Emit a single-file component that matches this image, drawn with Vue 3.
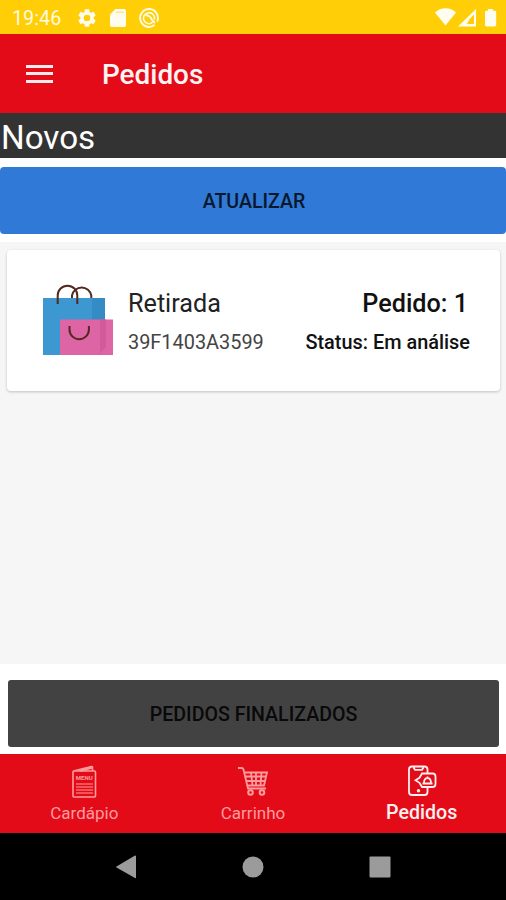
<template>
  <div class="screen">
    <div class="status-bar">
      <span class="clock">19:46</span>
      <svg class="status-gear" width="22" height="22" viewBox="0 0 24 24">
        <path d="M19.14 12.94c.04-.3.06-.61.06-.94s-.02-.64-.07-.94l2.03-1.58a.49.49 0 0 0 .12-.61l-1.92-3.32a.49.49 0 0 0-.59-.22l-2.39.96a7 7 0 0 0-1.62-.94l-.36-2.54A.48.48 0 0 0 13.92 2.4h-3.84a.48.48 0 0 0-.47.41l-.36 2.54c-.59.24-1.13.57-1.62.94l-2.39-.96a.48.48 0 0 0-.59.22L2.74 8.87a.48.48 0 0 0 .12.61l2.03 1.58c-.05.3-.09.63-.09.94s.02.64.07.94l-2.03 1.58a.49.49 0 0 0-.12.61l1.92 3.32c.12.22.37.29.59.22l2.39-.96c.5.38 1.03.7 1.62.94l.36 2.54c.05.24.24.41.48.41h3.84c.24 0 .44-.17.47-.41l.36-2.54a7 7 0 0 0 1.62-.94l2.39.96c.22.08.47 0 .59-.22l1.92-3.32a.48.48 0 0 0-.12-.61zM12 15.600a3.600 3.600 0 1 1 0-7.200 3.600 3.600 0 0 1 0 7.200z" />
      </svg>
      <svg class="status-card" width="16" height="18" viewBox="0 0 16 18">
        <path d="M5.500 0H14a2 2 0 0 1 2 2v14a2 2 0 0 1-2 2H2a2 2 0 0 1-2-2V5.500z" />
        <path class="notch" d="M6 3.200h8" />
      </svg>
      <svg class="status-sync" width="20" height="20" viewBox="0 0 20 20">
        <path d="M15.500 17A8.900 8.900 0 1 1 18.200 13.500" />
        <path class="inner" d="M13.700 14.200A5.500 5.500 0 1 1 15.300 11.500" />
        <path d="M6.500 7c3.500.3 5.500 2 6.500 5l3 3" />
      </svg>
      <span class="spacer"></span>
      <svg width="63" height="20" viewBox="0 0 63 20">
        <path d="M0 4.500C5.500-1.200 15.500-1.200 21 4.500L10.500 17.500z" />
        <path d="M41 1v17.500H23z" />
        <path class="signal-hole" d="M39 6.500v9.500h-7l2.500-5z" />
        <path d="M53 1h5v1.700h2q1.200 0 1.200 1.200v13.200q0 1.400-1.400 1.400h-8.400q-1.400 0-1.400-1.400V3.900q0-1.200 1.200-1.200H53z" />
      </svg>
    </div>

    <header class="app-bar">
      <button class="menu-button" aria-label="Menu">
        <span></span>
        <span></span>
        <span></span>
      </button>
      <h1>Pedidos</h1>
    </header>

    <h2 class="section-title">Novos</h2>
    <button class="refresh">ATUALIZAR</button>

    <main class="orders">
      <article v-for="order in orders" :key="order.code" class="order">
        <svg class="bags" width="72" height="72" viewBox="0 0 72 72">
          <path fill="#3d98d1" d="M1 14h62v57H1z" />
          <path fill="#358cc5" d="M50 14h13v57H50z" />
          <path fill="#de65a5" d="M18 35.500h53V71H18z" />
          <path fill="#d25a9b" d="M58 35.500h6V63l-8 8h2z" />
          <path class="handle" d="M15.700 20V11.500a9.800 9.800 0 0 1 19.600 0V20M30 14v-2.500a9.800 9.800 0 0 1 19.300 0V14M27.500 42v3.500a9.700 9.700 0 0 0 19.400 0V42" />
        </svg>
        <div class="details">
          <span class="kind">{{ order.kind }}</span>
          <span class="code">{{ order.code }}</span>
        </div>
        <div class="summary">
          <strong class="number">Pedido: {{ order.number }}</strong>
          <strong class="state">Status: {{ order.status }}</strong>
        </div>
      </article>
    </main>

    <div class="footer">
      <button class="finished">PEDIDOS FINALIZADOS</button>
    </div>

    <nav class="tabs">
      <a class="tab">
        <svg width="30" height="36" viewBox="0 0 30 36">
          <rect x="4" y="8" width="22.500" height="26" rx="1" />
          <path d="M4.500 8L22.500 3.500q1-.2 1 1V8M11 8l12-3" />
          <path class="thin" d="M7 21h17M7 24h17M7 27h17M7 30h17" />
          <text x="15.200" y="16.500" text-anchor="middle">MENU</text>
        </svg>
        <span>Cardápio</span>
      </a>
      <a class="tab">
        <svg width="34" height="36" viewBox="0 0 34 36">
          <path class="cart" d="M2 5h3.500q1.500 0 2 1.500L12 25.500h18M8.500 9.500h22.500l-3 13H11.500M10 13.500h20M11 18h18M15 10l1.500 12M20 10v12M25.500 10l-1 12" />
          <circle class="wheel" cx="14.500" cy="29.500" r="2.300" />
          <circle class="wheel" cx="26" cy="29.500" r="2.300" />
        </svg>
        <span>Carrinho</span>
      </a>
      <a class="tab active">
        <svg width="32" height="36" viewBox="0 0 32 36">
          <path d="M21.500 10V6.500q0-3-3-3H6q-3 0-3 3v22.500q0 3 3 3h12.500q3 0 3-3V24.500M7.500 4.500l1.500 2.300h7l1.500-2.300" />
          <path d="M16 10.500h10.500q3 0 3 3v7.500q0 3-3 3H16l-2.500-4.200-4-2.500 4-2.500z" />
          <path d="M16.500 20.500h10M18 20c0-6.500 7-6.500 7 0M21.500 13.500v1.500" />
          <circle class="dot" cx="12.500" cy="27.800" r="1.700" />
        </svg>
        <span>Pedidos</span>
      </a>
    </nav>

    <div class="system-nav">
      <svg width="22" height="26" viewBox="0 0 22 26">
        <path d="M20 1.500q1 0 1 1v21q0 1-1 .5L1.500 13.500q-1-.5 0-1z" />
      </svg>
      <svg width="22" height="26" viewBox="0 0 22 26">
        <circle cx="11" cy="13" r="10.500" />
      </svg>
      <svg width="22" height="26" viewBox="0 0 22 26">
        <rect x=".5" y="2.500" width="21" height="21" rx="1" />
      </svg>
    </div>
  </div>
</template>

<script setup>
import { ref } from 'vue'

const orders = ref([
  {
    kind: 'Retirada',
    code: '39F1403A3599',
    number: 1,
    status: 'Em análise'
  }
])
</script>

<style>
body {
  margin: 0;
}
</style>

<style scoped>
.screen {
  display: flex;
  flex-direction: column;
  width: 506px;
  height: 900px;
  background: #fff;
  font-family: Roboto, sans-serif;
}

button {
  padding: 0;
  border: 0;
  font-family: inherit;
}

h1,
h2 {
  margin: 0;
}

.status-bar {
  display: flex;
  align-items: center;
  box-sizing: border-box;
  height: 34px;
  padding: 1px 8px 0 12px;
  background: #ffce07;
  color: #fffbe0;
}

.status-bar svg {
  fill: #fffdf0;
}

.clock {
  width: 64px;
  padding-top: 2px;
  font-size: 19.8px;
}

.status-card {
  margin-left: 12px;
}

.status-card .notch {
  stroke: #ffe88a;
  stroke-width: 1.5;
}

.status-bar .status-sync {
  margin-left: 13px;
  fill: none;
  stroke: #fffbe0;
  stroke-width: 2;
}

.status-sync .inner {
  stroke-width: 1.6;
}

.status-bar .signal-hole {
  fill: #ffce07;
}

.spacer {
  flex: 1;
}

.app-bar {
  display: flex;
  align-items: center;
  box-sizing: border-box;
  height: 79px;
  padding: 2px 0 0 26px;
  background: #e40b19;
}

.menu-button {
  display: flex;
  flex-direction: column;
  gap: 4.5px;
  width: 27px;
  margin: 0 49px 2px 0;
  background: none;
}

.menu-button span {
  height: 3px;
  background: #ffe9ea;
}

h1 {
  color: #fff3f3;
  font-size: 27.9px;
  font-weight: 500;
}

.section-title {
  height: 45px;
  padding-left: 1px;
  background: #333;
  color: #fff;
  font-size: 33.2px;
  font-weight: 400;
  line-height: 50px;
}

.refresh {
  flex: none;
  height: 67px;
  margin: 9px 0 8px;
  padding: 1px 0 0 2px;
  border-radius: 4px;
  background: #3079d6;
  color: #07182d;
  font-size: 19.6px;
  font-weight: 500;
}

.orders {
  flex: 1;
  padding: 8px 6px 0 7px;
  background: #f6f6f6;
}

.order {
  display: flex;
  box-sizing: border-box;
  height: 141px;
  padding: 34px 30px 0 35px;
  border-radius: 4px;
  background: #fff;
  box-shadow: 0 1px 3px rgba(0, 0, 0, 0.22);
}

.handle {
  fill: none;
  stroke: #52291f;
  stroke-width: 2;
}

.details,
.summary {
  display: flex;
  flex-direction: column;
  gap: 9px;
  padding-top: 5px;
  line-height: 30px;
}

.details {
  margin-left: 14px;
  color: #222;
}

.summary {
  align-items: flex-end;
  margin-left: auto;
  color: #111;
}

.kind,
.number {
  font-size: 25.2px;
}

.number {
  padding-right: 2px;
  font-weight: 500;
}

.code,
.state {
  font-size: 19.9px;
}

.code {
  color: #444;
}

.state {
  font-weight: 500;
}

.footer {
  display: flex;
  padding: 16px 7px 7px 8px;
}

.finished {
  flex: 1;
  height: 67px;
  padding-top: 1px;
  border-radius: 3px;
  background: #424242;
  color: #090909;
  font-size: 19.6px;
  font-weight: 500;
}

.tabs {
  display: flex;
  height: 79px;
  background: #e40b19;
}

.tab {
  display: flex;
  flex: 1;
  flex-direction: column;
  align-items: center;
  box-sizing: border-box;
  padding-top: 9px;
  color: #ff9c9e;
  font-size: 17px;
  line-height: 28px;
}

.tab svg {
  fill: none;
  stroke: currentColor;
  stroke-width: 1.6;
}

.tab .thin {
  stroke-width: 1;
}

.tab .cart {
  stroke-width: 1.8;
}

.tab .wheel {
  stroke-width: 2;
}

.tab text {
  fill: currentColor;
  stroke: none;
  font-size: 6px;
  font-weight: 700;
}

.tab.active {
  color: #fff0f0;
  font-size: 19.6px;
  font-weight: 500;
}

.tab.active svg {
  stroke-width: 1.8;
}

.tab .dot {
  fill: currentColor;
  stroke: none;
}

.system-nav {
  display: flex;
  justify-content: center;
  gap: 105px;
  height: 67px;
  align-items: center;
  background: #000;
}

.system-nav svg {
  fill: #9b9b9b;
}
</style>
